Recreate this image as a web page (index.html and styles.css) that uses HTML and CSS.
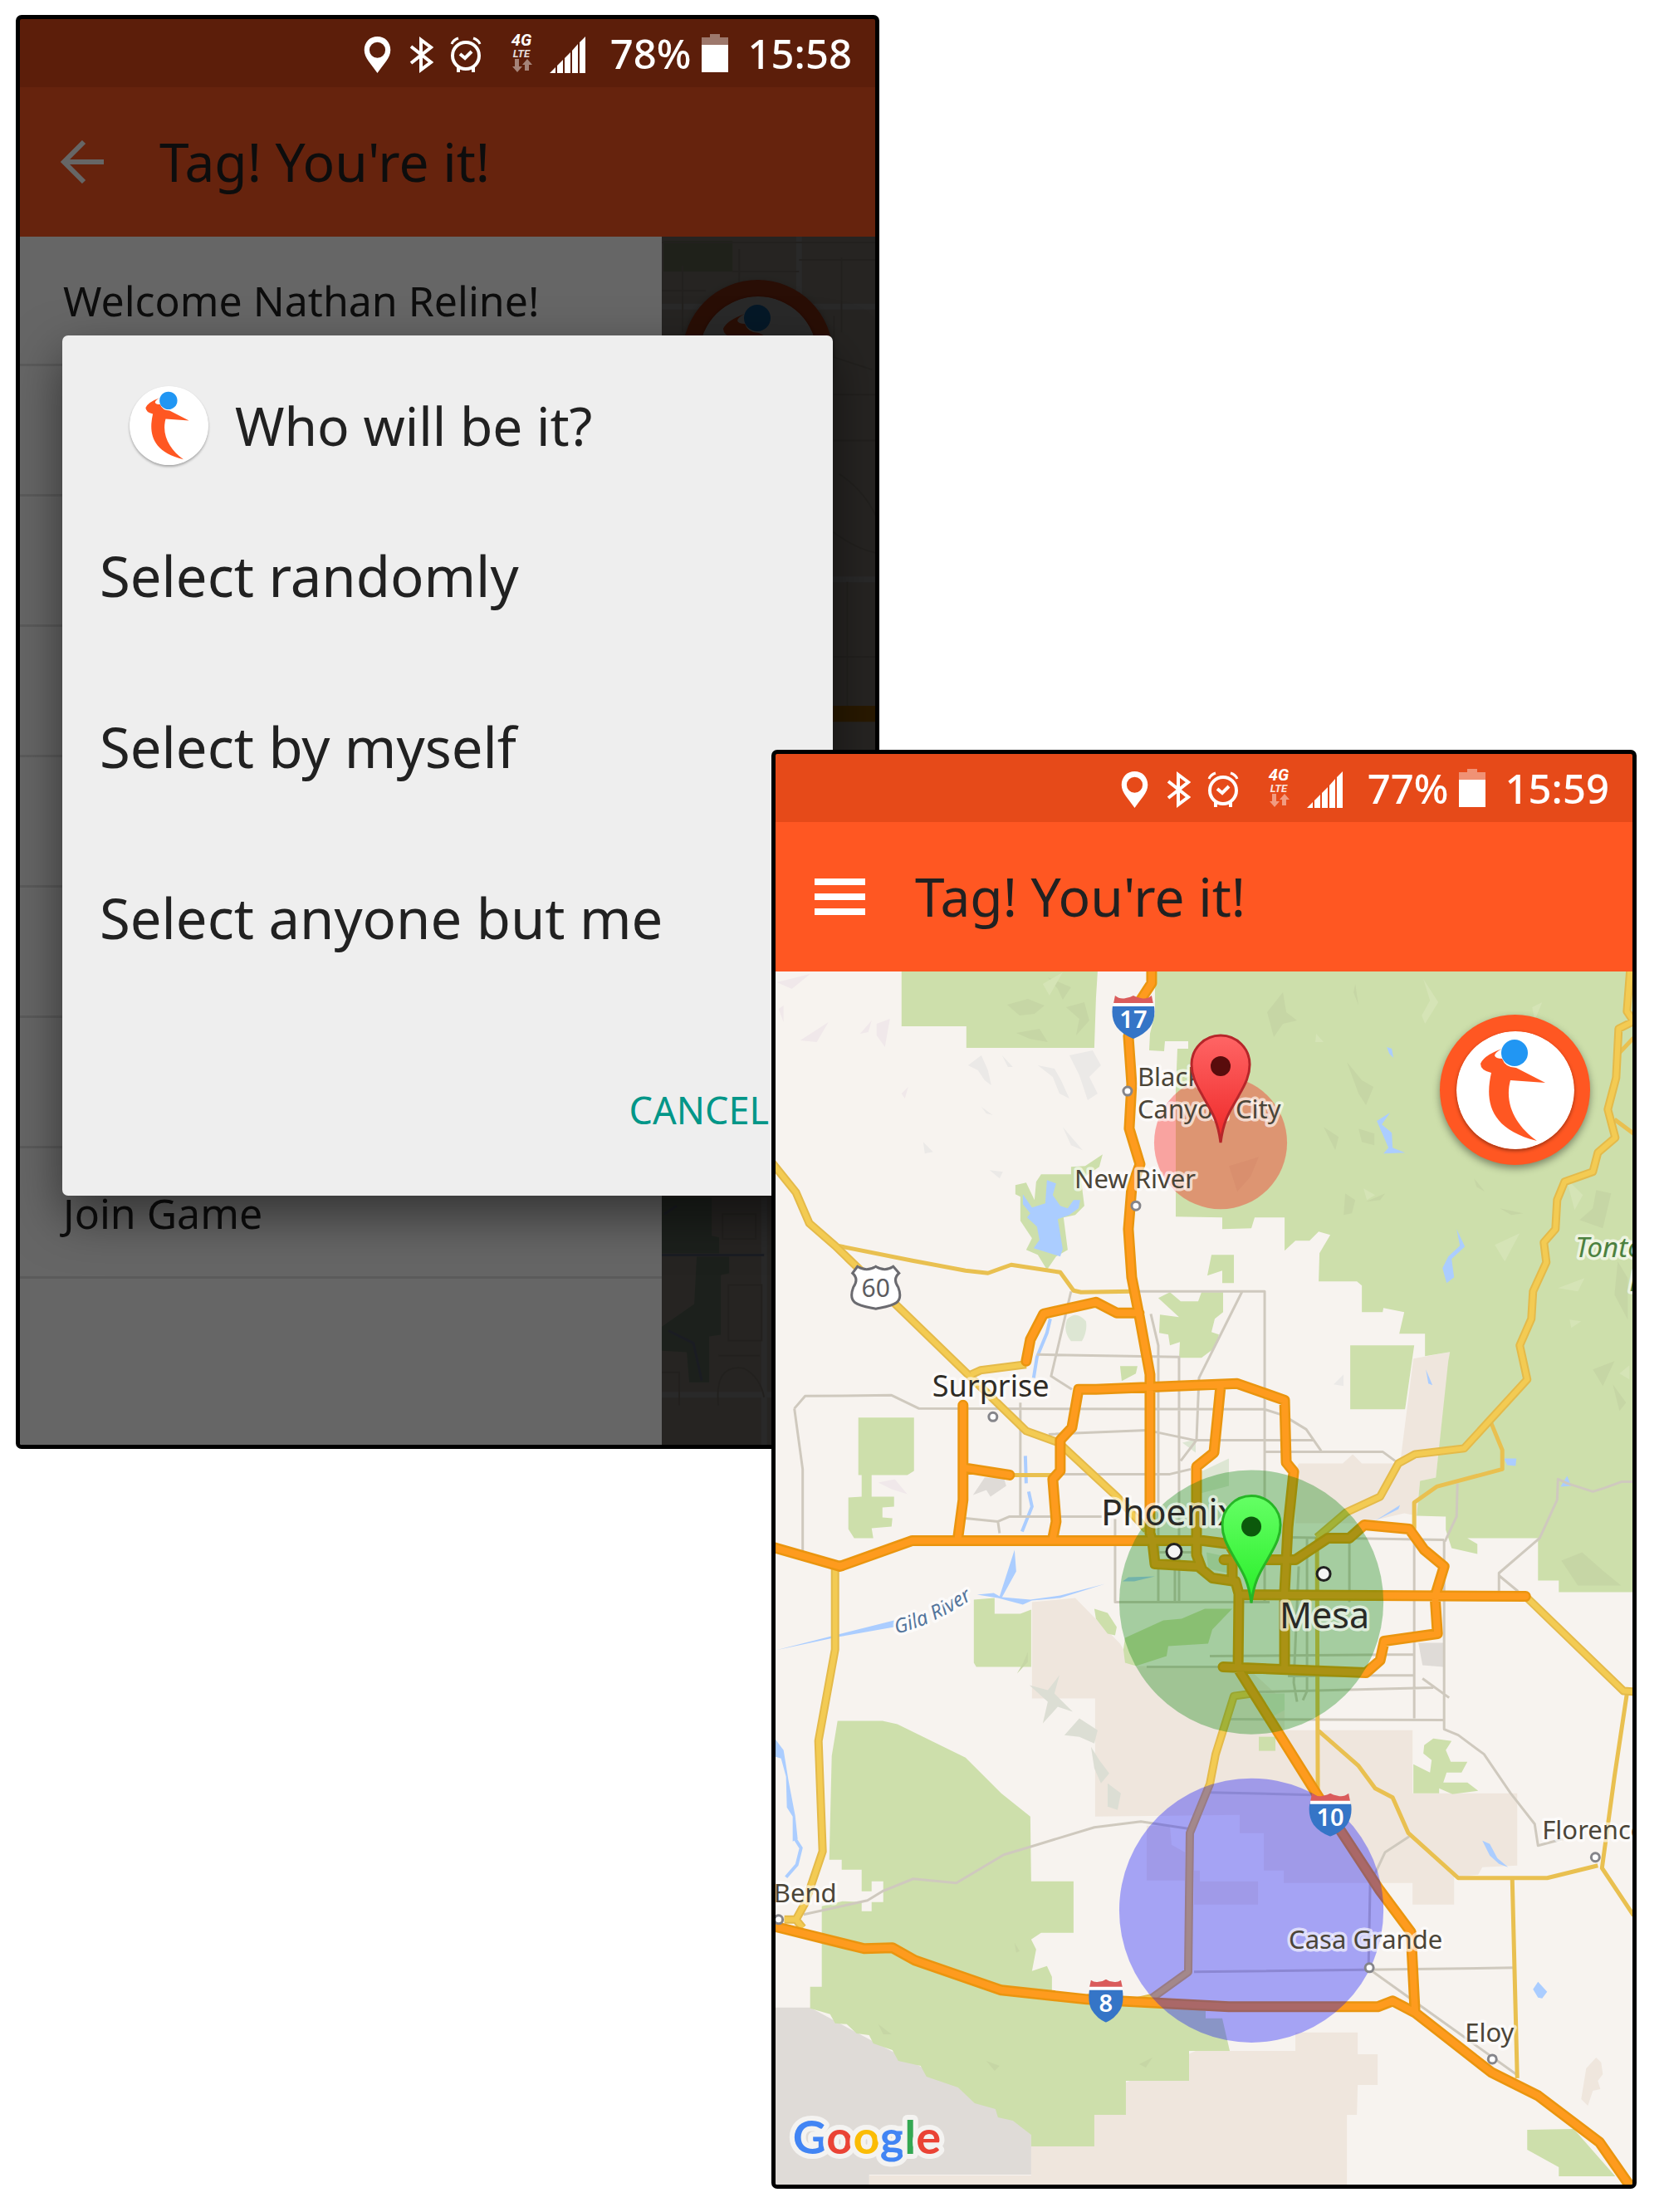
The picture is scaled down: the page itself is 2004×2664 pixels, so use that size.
FILE: index.html
```html
<!DOCTYPE html>
<html lang="en">
<head>
<meta charset="utf-8">
<title>Tag! You're it!</title>
<link rel="stylesheet" href="styles.css">
</head>
<body>
<svg class="defs" aria-hidden="true">
  <defs>
    <linearGradient id="red-pin" x1="0" y1="0" x2="0" y2="1"><stop offset="0" stop-color="#ff6565"/><stop offset="1" stop-color="#ee2727"/></linearGradient>
    <linearGradient id="green-pin" x1="0" y1="0" x2="0" y2="1"><stop offset="0" stop-color="#65ff65"/><stop offset="1" stop-color="#27ee27"/></linearGradient>
  </defs>
  <symbol id="logo" viewBox="-71 -71 142 142">
    <circle r="71" fill="#fff"/>
    <path fill="#ff5722" d="M-16-50Q-38-42-42-32Q-42-24-29-21C-36 10-34 46 26 61C2 44-14 18-6-12L36-9L1-27Q-12-27-16-38Q-24-38-25-42Q-24-46-16-50Z"/>
    <circle cx="-1" cy="-45" r="16" fill="#2196f3"/>
  </symbol>
  <symbol id="i-place" viewBox="0 0 33 46"><path fill="#fff" fill-rule="evenodd" d="M16.500 0C7 0 0 7 0 17C0 27 9 35 16.500 46C24 35 33 27 33 17C33 7 26 0 16.500 0ZM16.500 7A10 10 0 1 1 16.500 27A10 10 0 1 1 16.500 7Z"/></symbol>
  <symbol id="i-bluetooth" viewBox="0 0 29 44"><path fill="none" stroke="#fff" stroke-width="4" d="M2 12L26 31L14 40V4L26 13L2 32"/></symbol>
  <symbol id="i-alarm" viewBox="0 0 38 44"><g fill="none" stroke="#fff"><circle cx="19" cy="23" r="16" stroke-width="4"/><path stroke-width="4" d="M12 21L18 26L26 18M10 36V43M28 36V43"/><path stroke-width="3" d="M2 9Q4 4 10 2M36 9Q34 4 28 2"/></g></symbol>
  <symbol id="i-signal" viewBox="0 0 43 44"><path fill="#fff" d="M0 44L7 37V44ZM9 35L16 28V44H9ZM18 26L25 19V44H18ZM27 17L34 9V44H27ZM36 7L43 0V44H36Z"/></symbol>
  <symbol id="i-battery" viewBox="0 0 32 46"><path fill="#fff" fill-opacity=".4" d="M10 0H22V4H32V13H0V4H10Z"/><path fill="#fff" d="M0 13H32V46H0Z"/></symbol>
  <symbol id="shield" viewBox="0 0 52 52"><path fill="#da5c5c" d="M4 0Q10 5 17 3Q23 2 26 0Q29 2 35 3Q42 5 48 0L50 10H2Z"/><path fill="#fff" d="M2 9H50V14H2Z"/><path fill="#3575c7" d="M1 13H51Q53 28 46 38Q39 47 26 52Q13 47 6 38Q-1 28 1 13Z"/></symbol>
  <symbol id="shield-narrow" viewBox="0 0 42 52"><path fill="#da5c5c" d="M3 1Q7 4 12 3Q17 3 21 0Q25 3 30 3Q35 4 39 1L41 10H1Z"/><path fill="#fff" d="M1 9H41V14H1Z"/><path fill="#3575c7" d="M1 13H41Q43 28 38 37Q32 47 21 52Q10 47 4 37Q-1 28 1 13Z"/></symbol>
  <symbol id="pin" viewBox="-38 -38 76 134"><path stroke-width="3" d="M0 93C-4 62-13 53-22 36C-30 22-35 12-35-1A35 35 0 0 1 35-1C35 12 30 22 22 36C13 53 4 62 0 93Z"/></symbol>
</svg>

<main class="stage">
  <section class="phone phone-back">
    <div class="status status-dim">
      <svg class="ic-place"><use href="#i-place"/></svg>
      <svg class="ic-bt"><use href="#i-bluetooth"/></svg>
      <svg class="ic-alarm"><use href="#i-alarm"/></svg>
      <svg class="ic-lte" viewBox="0 0 28 48"><text class="g4" x="14" y="15">4G</text><text class="lte" x="14" y="29">LTE</text><path d="M6 31H11V40H15L9 47L3 40H6ZM18 45H23V38H27L21 31L15 38H18Z" fill="#fff" opacity=".45"/></svg>
      <svg class="ic-signal"><use href="#i-signal"/></svg>
      <span class="percent">78%</span>
      <svg class="ic-battery"><use href="#i-battery"/></svg>
      <time>15:58</time>
    </div>
    <header class="appbar">
      <button class="nav" aria-label="Back"><svg viewBox="0 0 61 52"><path d="M54 26H7M30 2L6 26L30 50" fill="none" stroke="#fff" stroke-width="6"/></svg></button>
      <h1>Tag! You're it!</h1>
    </header>
    <div class="content">
      <ul class="drawer">
        <li>Welcome Nathan Reline!</li><li></li><li></li><li></li><li></li><li></li><li></li><li>Join Game</li>
      </ul>
      <div class="peek">
        <svg class="map" viewBox="797 285 257 1455" preserveAspectRatio="xMinYMin slice" aria-hidden="true">
          <rect x="797" y="285" width="300" height="1500" fill="#ede3d6"/>
          <path fill="#c4d3a6" d="M799 290H882V327H799Z"/>
          <path fill="#b2cdb0" d="M796 1440H857V1486L866 1488V1507H796ZM839 1511H878V1531L868 1533V1605L854 1607V1662H830L827 1626L796 1624V1596L836 1568Z"/>
          <path fill="none" stroke="#fff" stroke-width="7" d="M962 285V400M797 369H1054M797 1677H1054M920 1440V1740M1000 697H1054"/>
          <path fill="none" stroke="#d8cebf" stroke-width="2" d="M797 292H1054M822 320V400M882 327H962M890 300V369M797 350H850M1013 310V400M962 313H1054M1004 380V430L1050 445M1003 475H1054M1003 530H1054M1010 570Q1040 590 1054 620M1003 640Q1030 660 1054 665M1020 700V850M1003 790H1054M870 1460H910V1490H870ZM877 1545H917V1612H877ZM865 1630H915M797 1650H818V1690M865 1690Q860 1640 895 1645Q915 1655 920 1680"/>
          <path fill="none" stroke="#a9afd8" stroke-width="3" d="M797 1509H920M800 1460L815 1450M805 1600L835 1615L845 1660"/>
          <path fill="#ffa000" d="M797 849H1054V868H797Z"/>
        </svg>
        <button class="fab" aria-label="Tag"><svg><use href="#logo"/></svg></button>
        <div class="peek-shade"></div>
      </div>
    </div>
    <div class="scrim">
      <div class="dialog" role="dialog" aria-labelledby="dlg-title">
        <div class="dialog-head"><svg class="dialog-logo"><use href="#logo"/></svg><h2 id="dlg-title">Who will be it?</h2></div>
        <div class="options">
          <button>Select randomly</button>
          <button>Select by myself</button>
          <button>Select anyone but me</button>
        </div>
        <div class="actions"><button>CANCEL</button></div>
      </div>
    </div>
  </section>

  <section class="phone phone-front">
    <div class="status">
      <svg class="ic-place"><use href="#i-place"/></svg>
      <svg class="ic-bt"><use href="#i-bluetooth"/></svg>
      <svg class="ic-alarm"><use href="#i-alarm"/></svg>
      <svg class="ic-lte" viewBox="0 0 28 48"><text class="g4" x="14" y="15">4G</text><text class="lte" x="14" y="29">LTE</text><path d="M6 31H11V40H15L9 47L3 40H6ZM18 45H23V38H27L21 31L15 38H18Z" fill="#fff" opacity=".45"/></svg>
      <svg class="ic-signal"><use href="#i-signal"/></svg>
      <span class="percent">77%</span>
      <svg class="ic-battery"><use href="#i-battery"/></svg>
      <time>15:59</time>
    </div>
    <header class="appbar">
      <button class="nav" aria-label="Menu"><svg viewBox="0 0 61 52"><path d="M0 4H61V12H0ZM0 22H61V30H0ZM0 40H61V48H0Z" fill="#fff"/></svg></button>
      <h1>Tag! You're it!</h1>
    </header>
    <div class="content">
      <svg class="map" viewBox="934 1171 1032 1460" preserveAspectRatio="xMidYMin slice" role="img" aria-label="Map of the Phoenix area">
        <rect x="900" y="1150" width="1100" height="1500" fill="#f7f3ef"/>
        <!-- reservations and military land -->
        <g fill="#efe6dd">
          <path d="M1702 1637L1746 1629L1729 1780L1710 1784L1706 1826L1691 1823L1640 1835H1560V1773L1564 1763H1617L1629 1752L1640 1763H1686Z"/>
          <path d="M1243 1930L1295 1925L1349 1980L1365 2007H1500L1547 2050V2084H1701V2160H1827V2247L1785 2249L1780 2258L1751 2261V2294H1701V2268H1546V2253H1522V2208H1493V2186L1319 2188V2046H1243Z"/>
          <path d="M1381 2199H1409L1411 2222L1427 2231V2265H1381ZM1438 2253H1445V2266H1515V2294H1438Z"/>
          <path d="M1047 2631V2620H1242V2560L1440 2470H1560V2448H1635V2474H1659V2511H1635L1634 2547H1622V2631Z"/>
          <path d="M1910 2491L1922 2478L1928 2484L1930 2498L1924 2506L1927 2516L1918 2518L1912 2536L1904 2528Z"/>
        </g>
        <path fill="#dfdbd7" d="M934 2418H976L1242 2560V2619H1047V2631H934ZM1172 1801L1186 1780H1209L1212 1790L1193 1803L1188 1795ZM1708 1979H1738V2008L1713 2006Z"/>
        <path fill="#dde6d3" d="M1285 1590Q1296 1578 1308 1592Q1310 1604 1303 1616H1290Q1280 1604 1285 1590ZM1424 1738L1440 1734V1750ZM1442 1775L1480 1757V1790L1442 1800ZM1453 1870L1500 1880L1480 1895L1455 1890ZM1515 2040H1547V2060L1525 2072Z"/>
        <!-- parks and forests -->
        <g fill="#cddfab">
          <path d="M1086 1171H1322L1320 1203L1318 1263H1164V1237H1086Z"/>
          <path d="M1391 1171H1967V1918H1877V1904H1852V1853H1767L1779 1860V1872L1748 1865L1741 1843V1827L1706 1826L1710 1784L1729 1780L1744 1640L1746 1629L1716 1634V1607H1685L1691 1581L1666 1576L1665 1581H1640V1549L1634 1544H1588L1589 1510L1602 1488L1588 1484L1577 1495H1560L1547 1507V1467H1511L1507 1480L1472 1481V1467L1416 1466V1314L1418 1264H1431V1255H1403L1402 1267L1384 1266L1385 1246L1391 1221Z"/>
          <path d="M1626 1621H1703L1692 1698H1626Z"/>
          <path d="M1223 1428L1236 1425L1246 1446L1248 1424L1254 1415H1290V1406L1307 1405L1328 1391L1324 1406L1302 1421L1306 1453L1295 1464L1281 1467L1286 1506L1272 1514L1261 1530L1250 1512L1236 1506L1243 1492L1229 1471V1442L1223 1439Z"/>
          <path d="M1395 1564L1409 1557L1422 1568H1443L1447 1557H1473V1581L1463 1589L1459 1605L1468 1608L1463 1624L1447 1636H1420L1421 1617L1409 1621L1407 1608L1396 1606L1397 1584L1420 1587Z"/>
          <path d="M1459 1512H1486V1546H1472V1531L1454 1537ZM1349 1646H1370L1368 1655L1351 1664Z"/>
          <path d="M1034 1708H1101V1772L1093 1777H1050V1803H1077V1815L1063 1816V1828L1075 1829L1074 1839L1050 1841L1052 1853H1029L1022 1842V1804L1038 1803V1777H1034Z"/>
          <path d="M1173 1927L1198 1925V1944H1229L1242 1939V2008H1176L1173 2003Z"/>
          <path d="M1009 2073H1063L1081 2077L1163 2117L1206 2160L1241 2188L1242 2266H1293V2328H1254L1242 2336L1248 2348L1243 2374L1261 2368L1267 2381V2399L1395 2415L1452 2422V2431H1472L1481 2470H1432V2506H1356V2547H1318V2585H1242V2571L1220 2554L1202 2550L1199 2540L1174 2533L1154 2514L1116 2501L1109 2488L1082 2482L1075 2469L1052 2461L1047 2451L1032 2449L1020 2438L1006 2437L1000 2426L976 2419V2393H990V2296L1015 2290L1038 2291V2302H1050V2291H1064V2266H1050V2278H1038V2252H1014V2240H999L1002 2115Z"/>
          <path d="M1839 2565L1895 2564L1945 2621H1877V2610L1839 2589Z"/>
          <path d="M1715 2102L1726 2094L1748 2097L1741 2108L1747 2122H1767L1760 2135H1742L1738 2147H1767L1780 2157L1749 2161L1733 2154V2160H1702V2125L1722 2135L1724 2120L1714 2112Z"/>
          <path d="M1516 2092H1536V2109H1516Z"/>
          <path d="M1353 1987L1355 1973L1401 1952L1423 1950L1451 1938H1484L1460 1963L1455 1980L1407 1983L1405 1995L1368 2007L1355 2003Z"/>
          <path d="M1318 1938L1334 1943L1345 1960L1343 1970L1334 1968L1320 1950Z"/>
        </g>
        <!-- terrain shading -->
        <g fill="#c6d6a5">
          <path d="M1213 1211L1238 1204L1258 1212L1246 1222L1228 1224ZM1262 1178L1290 1190L1280 1205L1274 1192ZM1284 1214L1306 1208L1312 1230L1296 1248L1300 1228ZM1224 1245L1252 1240L1262 1256L1240 1252ZM1526 1220L1545 1196L1549 1220L1562 1230L1545 1234L1534 1250ZM1622 1280L1640 1302L1654 1310L1645 1332L1636 1318ZM1636 1360L1655 1366V1380L1640 1376ZM1594 1358L1612 1370L1608 1386ZM1620 1438L1632 1446L1628 1462L1618 1464ZM1645 1448L1668 1438L1662 1446ZM1806 1456L1834 1462L1820 1464ZM1922 1434L1940 1438L1930 1480L1902 1470L1918 1456ZM1948 1520L1960 1540V1590L1944 1560ZM1632 1186L1636 1212L1630 1196ZM1890 1282L1905 1290L1898 1302ZM1775 1420L1788 1436L1778 1430ZM1918 1650L1944 1640L1930 1670ZM1880 1880L1905 1870L1930 1892L1952 1910H1900ZM1942 1668L1958 1690L1950 1700ZM1480 1405L1516 1394L1506 1418L1490 1436Z"/>
          <path d="M1058 2438L1074 2450L1064 2450ZM1188 2482L1204 2488L1198 2494ZM1372 2486L1388 2478L1380 2490ZM1222 2340L1228 2350L1224 2352ZM1232 2004L1238 1990V2002L1225 2016Z"/>
        </g>
        <g fill="#d5e4b6">
          <path d="M1714 1180L1732 1208L1716 1234L1712 1224L1722 1206ZM1845 1214L1857 1208L1848 1230ZM1585 1246L1594 1256H1584ZM1642 1432L1656 1440L1646 1446ZM1800 1500L1830 1486L1812 1520ZM1876 1552L1908 1540L1900 1556ZM1886 1420L1906 1440L1896 1458ZM1950 1655L1962 1645V1662ZM1890 1590L1904 1592L1892 1600ZM1256 1186L1280 1172L1264 1200Z"/>
        </g>
        <g fill="#ebe9e7">
          <path d="M1166 1284L1182 1272L1190 1290L1194 1308L1186 1302L1178 1290ZM1250 1284L1270 1288L1278 1302L1288 1324L1276 1318L1268 1298ZM1288 1272L1316 1266L1326 1284L1312 1298L1322 1318L1310 1326L1300 1296ZM1112 1376L1124 1388L1114 1390ZM1280 1358L1304 1386L1290 1380ZM1182 1334L1196 1344L1188 1342ZM1192 1410L1208 1412L1204 1420ZM1606 1668L1618 1656V1670ZM1207 1272L1220 1286L1214 1286Z"/>
        </g>
        <g fill="#dcded4"><path d="M1240 2030L1262 2036L1276 2018L1270 2040L1292 2062L1274 2056L1256 2076L1262 2050ZM1282 2090L1300 2070L1322 2084L1318 2100L1300 2092ZM1314 2104L1324 2120L1336 2136L1326 2148L1318 2130ZM1334 2148L1350 2160L1346 2180L1334 2176Z"/></g>
        <g fill="#f0e8ea"><path d="M936 1184L976 1174L954 1192ZM964 1254L998 1232L984 1256ZM1036 1246L1050 1230L1046 1244ZM1056 1234L1072 1228L1066 1262L1056 1248ZM1086 1318L1094 1310L1090 1324ZM1058 1786L1078 1782L1093 1800L1074 1794ZM938 1216L944 1212V1232Z"/></g>
        <!-- lakes and rivers -->
        <g fill="#abcdff">
          <path d="M1232 1439L1243 1455L1259 1450L1261 1422L1272 1426L1268 1440L1277 1453L1286 1456L1293 1446H1301L1299 1456L1288 1464L1274 1469L1280 1505L1277 1514L1245 1504L1252 1494L1249 1478L1237 1467L1241 1462L1232 1451Z"/>
          <path d="M1670 1262L1676 1264L1678 1275L1673 1270ZM1674 1341L1664 1355L1676 1365L1677 1383L1692 1389L1666 1390L1672 1383L1658 1351ZM1754 1481L1764 1502L1748 1517L1751 1539L1742 1546L1737 1528L1744 1514L1758 1501ZM1717 1650L1725 1669L1720 1667ZM1811 1757H1826L1825 1766L1815 1765ZM1686 1813L1684 1818L1656 1832ZM1887 1778L1892 1790L1879 1791ZM1785 2217L1794 2221L1803 2238L1816 2249L1805 2245L1794 2235ZM1852 2387L1863 2399L1857 2407L1852 2406L1846 2396Z"/>
          <path d="M934 1988L1077 1952V1960L1009 1972ZM1177 1921L1197 1919L1204 1923L1222 1867L1224 1893L1207 1924L1241 1927L1277 1922L1331 1908L1277 1925L1243 1928L1232 1933L1202 1925ZM1352 1905L1359 1900L1391 1899L1366 1905Z"/>
          <path d="M934 2095L944 2108L950 2145L958 2187L961 2215L955 2218V2188L948 2177L947 2140L941 2118L934 2116Z"/>
        </g>
        <path fill="none" stroke="#abcdff" stroke-width="4" d="M1265 1589L1261 1606L1249 1635L1245 1660M1235 1754L1236 1787M1239 1797L1243 1815L1231 1845M958 2215L965 2226L960 2246L947 2261"/>
        <!-- local roads -->
        <g class="local">
          <path d="M1363 1556H1523V1930M957 1697L970 1682L1074 1681L1107 1697L1523 1698L1545 1705L1573 1722L1591 1748M957 1697L967 1770V1868M1290 1556L1266 1658L1291 1674M1249 1632L1420 1635V1930M1386 1583L1395 1621V1930M1496 1556L1444 1660L1441 1735L1422 1760M1229 1690V1827M1263 1728L1381 1723L1438 1735H1582M1277 1776H1409L1434 1770M1163 1829L1202 1833L1216 1827H1327M1202 1833L1204 1847M1343 1830V1930H1529M1415 1870V1930M1523 1749H1665L1680 1760"/>
          <path d="M1555 1852L1739 1855M1391 1870H1441M1457 1995L1702 1993M1381 2008H1470M1551 2019L1704 2018M1516 2038L1726 2033M1481 2071L1739 2072M1703 1847V2070M1739 1855V2083L1756 2090L1787 2113L1819 2160L1848 2197L1852 2223L1882 2215M1755 1787L1754 1827L1740 1857M1713 2022L1745 2045M1564 1887L1558 2027L1562 2050M1574 1853V2037L1569 2048M1625 1853V1930"/>
          <path d="M1967 1785H1953L1931 1793L1918 1797L1887 1787L1876 1782L1875 1807L1854 1853L1805 1895V1917M1805 1898L1828 1917M968 2306L1045 2289L1063 2278L1100 2263L1152 2268L1209 2234L1249 2222L1318 2201L1374 2194L1434 2203M1458 2159L1580 2162M1438 2375L1823 2370M1697 2212L1668 2231L1650 2269L1648 2370M1652 2374L1827 2499"/>
        </g>
        <!-- state routes -->
        <g class="route-thin">
          <path d="M1009 1501L1099 1519L1163 1531L1190 1534L1218 1524L1277 1533L1293 1555L1302 1557L1363 1556M1220 1777H1268M1795 1713L1809 1747V1770L1730 1791L1703 1810V1842M1944 1349L1967 1366M1948 1271L1967 1251M1959 2040L1944 2140L1929 2250L1967 2307M1924 2247L1863 2262H1756L1696 2208L1677 2165L1656 2154L1636 2127L1588 2085M1586 1852L1587 2160M1821 2263L1827 2503"/>
        </g>
        <g class="route-edge"><use href="#routes"/></g>
        <g class="route"><path id="routes" d="M930 1401L959 1437L975 1474L1006 1501L1166 1656L1236 1724L1275 1738L1345 1803L1381 1843M1170 1656L1181 1651L1236 1644M1006 1887V1987L986 2097L991 2230L970 2292L959 2312H945M959 2312L967 2322M1963 1168L1959 1219L1967 1231L1949 1240L1946 1299L1936 1337L1945 1371L1924 1389L1918 1412L1884 1424L1875 1446L1873 1481L1859 1497L1862 1521L1846 1556L1844 1589L1830 1621L1839 1662L1763 1745L1704 1752L1684 1763L1662 1803L1621 1822L1586 1852M1837 1923L1955 2037L1970 2038M1508 2040L1486 2043L1464 2113L1457 2149L1433 2208L1431 2375L1388 2406L1366 2411"/></g>
        <!-- freeways -->
        <g class="freeway-edge"><use href="#freeways"/></g>
        <g class="freeway"><path id="freeways" d="M1387 1165V1185L1374 1205L1359 1249L1363 1306L1360 1360L1373 1403L1363 1431L1359 1481L1363 1539L1372 1585L1385 1656V1847L1388 1857L1391 1884L1443 1887L1460 1901L1488 1905L1492 1920L1491 2010L1587 2163L1661 2276L1699 2327L1704 2424L1796 2496L1852 2524L1926 2580L1965 2636M1236 1640L1241 1614L1257 1583L1320 1569L1345 1582H1372M1268 1853L1272 1833L1268 1782L1277 1772V1735L1291 1720L1299 1674L1320 1674L1490 1667L1547 1687L1549 1762L1558 1773L1551 1840L1547 1917V2005M1160 1693V1807L1154 1852M1165 1769L1216 1777M928 1863L1012 1887L1099 1856H1449L1480 1860L1489 1875M1470 1670L1462 1750L1441 1767V1873L1447 1889M1474 1879H1560L1599 1853H1625L1643 1837L1697 1842L1715 1867L1739 1887L1728 1923L1731 1968L1667 1977L1662 2000L1645 2015L1473 2008M1484 1879V1905M1494 1921L1837 1923M928 2319L1041 2347L1075 2346L1102 2361L1206 2397L1309 2408L1384 2412L1480 2417H1659L1677 2410L1704 2424"/></g>
        <!-- tag ranges -->
        <circle cx="1470" cy="1377" r="80" fill="#f00" fill-opacity=".33"/>
        <circle cx="1507" cy="1930" r="159" fill="#008000" fill-opacity=".33"/>
        <circle cx="1507" cy="2301" r="159" fill="#00f" fill-opacity=".33"/>
        <!-- towns -->
        <g fill="#fff" stroke="#85858a" stroke-width="3">
          <circle cx="1358" cy="1315" r="5"/><circle cx="1368" cy="1453" r="5"/><circle cx="1196" cy="1707" r="5"/><circle cx="938" cy="2312" r="5"/><circle cx="1921" cy="2237" r="5"/><circle cx="1649" cy="2370" r="5"/><circle cx="1797" cy="2480" r="5"/>
        </g>
        <g fill="#f4f4f4" stroke="#222" stroke-width="3"><circle cx="1414" cy="1869" r="9"/><circle cx="1594" cy="1896" r="8"/></g>
        <g class="label">
          <text x="1370" y="1309">Black</text><text x="1370" y="1348">Canyon City</text><text x="1294" y="1432">New River</text><text x="1552" y="2347">Casa Grande</text><text x="1857" y="2215">Florence</text><text x="1764" y="2459">Eloy</text><text x="1008" y="2291" text-anchor="end">Gila Bend</text>
          <text class="town" x="1123" y="1683">Surprise</text>
          <text class="city" x="1326" y="1838">Phoenix</text><text class="city" x="1541" y="1961">Mesa</text>
          <text class="forest" x="1897" y="1515">Tonto</text><text class="forest" x="1962" y="1556">National</text>
          <path id="river" fill="none" stroke="none" d="M1080 1968Q1125 1958 1180 1920"/>
          <text class="river"><textPath href="#river">Gila River</textPath></text>
        </g>
        <!-- route shields -->
        <use href="#shield" x="1339" y="1200" width="52" height="52"/><text class="shield-no" x="1365" y="1239">17</text>
        <use href="#shield" x="1576" y="2160" width="52" height="52"/><text class="shield-no" x="1602" y="2199">10</text>
        <use href="#shield-narrow" x="1311" y="2384" width="42" height="52"/><text class="shield-no" x="1332" y="2423">8</text>
        <path fill="#fff" stroke="#6b6b70" stroke-width="3" d="M1033 1526L1027 1534Q1035 1541 1028 1551C1020 1572 1036 1573 1055 1577C1074 1573 1090 1572 1082 1551Q1075 1541 1083 1534L1076 1526Q1066 1533 1055 1526Q1044 1533 1033 1526Z"/>
        <text class="us-no" x="1055" y="1563">60</text>
        <!-- players -->
        <use href="#pin" x="1432" y="1246" width="76" height="134" fill="url(#red-pin)" stroke="#b6262a"/><circle cx="1470" cy="1285" r="12" fill="#590c0c"/>
        <use href="#pin" x="1469" y="1800" width="76" height="134" fill="url(#green-pin)" stroke="#26b626"/><circle cx="1507" cy="1839" r="12" fill="#0c590c"/>
        <text class="google" x="955" y="2594"><tspan fill="#4285f4">G</tspan><tspan fill="#ea4335">o</tspan><tspan fill="#fbbc05">o</tspan><tspan fill="#4285f4">g</tspan><tspan fill="#34a853">l</tspan><tspan fill="#ea4335">e</tspan></text>
      </svg>
      <button class="fab" aria-label="Tag"><svg><use href="#logo"/></svg></button>
    </div>
  </section>
</main>
</body>
</html>
```
FILE: styles.css
```css
* { box-sizing: border-box; }

body {
  margin: 0;
  background: #fff;
  color: #212121;
  font-family: "Noto Sans", "Open Sans", sans-serif;
}

h1, h2, ul { margin: 0; padding: 0; font-weight: 400; }
ul { list-style: none; }

button {
  margin: 0;
  padding: 0;
  border: 0;
  background: none;
  color: inherit;
  font: inherit;
  text-align: left;
  cursor: pointer;
}

.defs { position: absolute; width: 0; height: 0; }

/* Two overlapping phones on a shared grid */
.stage {
  display: grid;
  grid-template-columns: 910fr 130fr 912fr;
  grid-template-rows: 885px auto auto;
  padding: 18px 33px 28px 19px;
}

.phone {
  position: relative;
  display: flex;
  flex-direction: column;
  min-width: 0;
  border: 5px solid #000;
  border-radius: 7px;
  overflow: hidden;
  background: #000;
}
.phone-back { grid-column: 1 / 3; grid-row: 1 / 3; align-self: start; }
.phone-front { grid-column: 2 / 4; grid-row: 2 / 4; z-index: 1; }

/* Status bar */
.status {
  display: flex;
  align-items: center;
  justify-content: flex-end;
  height: 82px;
  padding-right: 28px;
  background: #e64a19;
  color: #fff;
  font-size: 49px;
  font-weight: 500;
  line-height: 82px;
}
.status-dim { position: relative; z-index: 2; background: #5c1e0a; }
.status svg { flex: none; height: 44px; margin-top: 4px; }
.ic-place { width: 33px; }
.ic-bt { width: 29px; margin-left: 22px; }
.ic-alarm { width: 38px; margin-left: 20px; }
.status .ic-lte { width: 28px; height: 48px; margin: 0 0 0 34px; overflow: visible; }
.ic-signal { width: 43px; margin-left: 20px; }
.percent { margin-left: 30px; }
.status .ic-battery { width: 32px; height: 46px; margin: 0 24px 0 12px; }
.g4, .lte { fill: #fff; font-family: Roboto, sans-serif; font-style: italic; font-weight: 700; text-anchor: middle; }
.g4 { font-size: 20px; }
.lte { font-size: 13px; opacity: .85; }

/* App bar */
.appbar {
  display: flex;
  align-items: center;
  height: 180px;
  padding-left: 47px;
  background: #ff5722;
}
.nav { width: 121px; height: 52px; }
.nav svg { display: block; width: 61px; height: 52px; }
.appbar h1 { font-size: 64px; line-height: 84px; }

.content { position: relative; display: flex; }
.map { display: block; width: 100%; }
.phone-front .map { aspect-ratio: 1032 / 1461; }

/* Floating action button */
.fab {
  position: absolute;
  top: 52px;
  right: 51px;
  display: grid;
  place-items: center;
  width: 181px;
  height: 181px;
  border-radius: 50%;
  background: #ff5722;
  box-shadow: 0 4px 10px rgba(0, 0, 0, .4);
}
.fab svg {
  width: 142px;
  height: 142px;
  border-radius: 50%;
  box-shadow: 0 2px 4px rgba(0, 0, 0, .4);
}

/* Drawer */
.drawer {
  flex: 3;
  display: grid;
  grid-template-rows: repeat(8, 156px);
  row-gap: 1px;
  padding-bottom: 200px;
  background: #fff;
}
.drawer li {
  display: flex;
  align-items: center;
  padding-left: 52px;
  border-bottom: 3px solid #e4e4e4;
  font-size: 50px;
  line-height: 66px;
}
.peek { position: relative; flex: 1; overflow: hidden; }
.peek .map { position: absolute; inset: 0; height: 100%; }
.peek-shade { position: absolute; inset: 0; background: rgba(0, 0, 0, .6); }

/* Dialog */
.scrim {
  position: absolute;
  inset: 0;
  z-index: 1;
  display: flex;
  align-items: center;
  padding: 80px 51px 0;
  background: rgba(0, 0, 0, .6);
}
.dialog {
  flex: 1;
  border-radius: 7px;
  background: #eee;
  box-shadow: 0 24px 60px rgba(0, 0, 0, .5);
}
.dialog-head {
  display: flex;
  align-items: center;
  gap: 32px;
  padding: 61px 81px 30px;
}
.dialog-logo {
  width: 95px;
  height: 95px;
  border-radius: 50%;
  box-shadow: 0 2px 3px rgba(0, 0, 0, .3);
}
.dialog h2 { font-size: 64px; line-height: 95px; }
.options { display: flex; flex-direction: column; }
.options button { height: 206px; padding-left: 45px; font-size: 67px; }
.actions {
  display: flex;
  justify-content: flex-end;
  padding: 99px 77px 73px;
  color: #009688;
  font-size: 45px;
  line-height: 60px;
}

/* Map strokes and lettering */
.local, .route, .route-edge, .route-thin, .freeway, .freeway-edge { fill: none; stroke-linejoin: round; }
.local { stroke: #cfc9be; stroke-width: 3; }
.route-thin { stroke: #e9c050; stroke-width: 5; }
.route-edge { stroke: #e4ba4a; stroke-width: 10; }
.route { stroke: #f3cb53; stroke-width: 6; }
.freeway, .freeway-edge { stroke-linecap: round; }
.freeway-edge { stroke: #ea950f; stroke-width: 13; }
.freeway { stroke: #fe9b1e; stroke-width: 8; }

.label text {
  fill: #4b4538;
  stroke: #fff;
  stroke-opacity: .65;
  stroke-width: 7;
  stroke-linejoin: round;
  paint-order: stroke;
  font-size: 31px;
}
.label .town { fill: #2f2c26; font-size: 36px; }
.label .city { fill: #2a2a26; font-size: 43px; }
.label .forest { fill: #4c8140; font-size: 33px; font-style: italic; }
.label .river { fill: #54759c; font-size: 24px; font-style: italic; }
.shield-no { fill: #fff; font-size: 29px; font-weight: 600; text-anchor: middle; }
.us-no { fill: #5c5c60; font-size: 30px; text-anchor: middle; }
.google {
  stroke: #f4f3f1;
  stroke-width: 12;
  stroke-linejoin: round;
  paint-order: stroke;
  font: 700 56px Lato, sans-serif;
}
```
